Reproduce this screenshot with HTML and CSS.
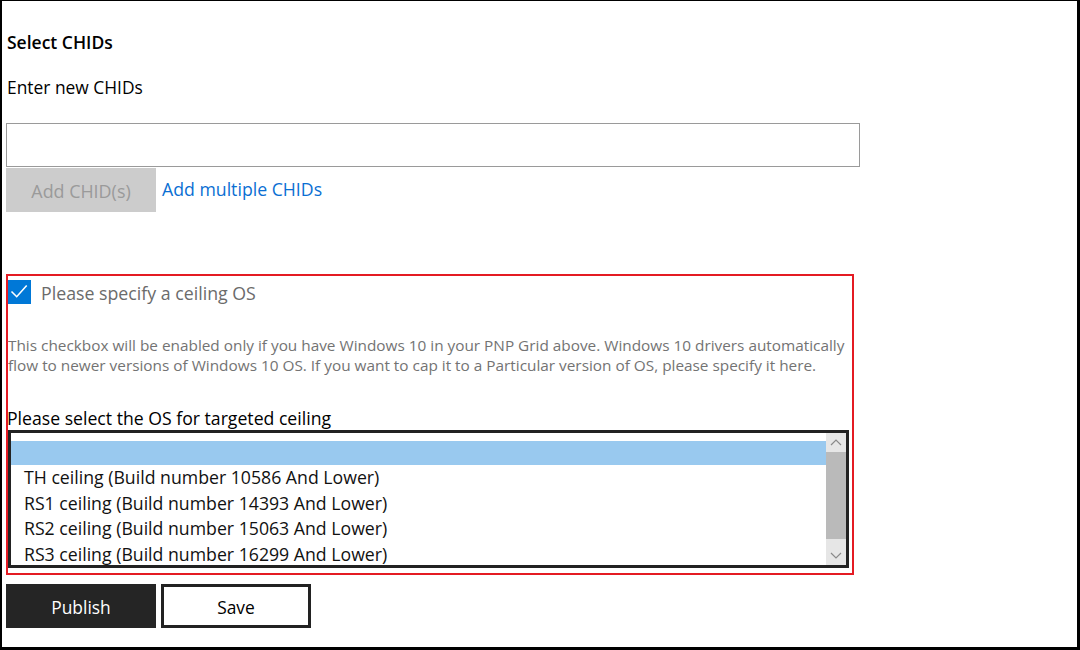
FILE: index.html
```html
<!DOCTYPE html>
<html>
<head>
<meta charset="utf-8">
<link rel="stylesheet" href="styles.css">
</head>
<body>
<div class="page">
  <h2 class="title">Select CHIDs</h2>
  <div class="label">Enter new CHIDs</div>
  <input class="chid-input" type="text">
  <div class="add-row">
    <button class="btn-disabled">Add CHID(s)</button>
    <a class="link" href="#">Add multiple CHIDs</a>
  </div>
  <div class="ceiling-box">
    <div class="check-row">
      <span class="checkbox">
        <svg width="23" height="24" viewBox="0 0 23 24"><polyline points="3.5,11.5 8.7,16.7 18.7,5.5" fill="none" stroke="#fff" stroke-width="1.6"/></svg>
      </span>
      <span class="check-label">Please specify a ceiling OS</span>
    </div>
    <p class="note">This checkbox will be enabled only if you have Windows 10 in your PNP Grid above. Windows 10 drivers automatically flow to newer versions of Windows 10 OS. If you want to cap it to a Particular version of OS, please specify it here.</p>
    <div class="select-label">Please select the OS for targeted ceiling</div>
    <div class="listbox">
      <div class="options">
        <div class="option selected">&nbsp;</div>
        <div class="option">TH ceiling (Build number 10586 And Lower)</div>
        <div class="option">RS1 ceiling (Build number 14393 And Lower)</div>
        <div class="option">RS2 ceiling (Build number 15063 And Lower)</div>
        <div class="option">RS3 ceiling (Build number 16299 And Lower)</div>
      </div>
      <div class="scrollbar">
        <div class="arrow up"><svg width="20" height="20" viewBox="0 0 20 20"><polyline points="5,12 10,7 15,12" fill="none" stroke="#8a8a8a" stroke-width="1.2"/></svg></div>
        <div class="thumb"></div>
        <div class="track"></div>
        <div class="arrow down"><svg width="20" height="20" viewBox="0 0 20 20"><polyline points="5,8 10,13 15,8" fill="none" stroke="#8a8a8a" stroke-width="1.2"/></svg></div>
      </div>
    </div>
  </div>
  <div class="actions">
    <button class="btn-primary">Publish</button>
    <button class="btn-secondary">Save</button>
  </div>
</div>
</body>
</html>
```
FILE: styles.css
```css
html, body {
  margin: 0;
  padding: 0;
  background: #fff;
}
.page {
  box-sizing: border-box;
  width: 1080px;
  height: 650px;
  border-style: solid;
  border-color: #000;
  border-width: 1px 3px 3px 2px;
  padding: 30px 4px 0 4px;
  font-family: "Open Sans", "Noto Sans", sans-serif;
  color: #000;
  overflow: hidden;
}
.title {
  margin: 0;
  font-size: 17.5px;
  font-weight: 600;
  line-height: 22px;
  padding-left: 1px;
}
.label {
  margin-top: 23px;
  font-size: 17.4px;
  line-height: 22px;
  padding-left: 1px;
}
.chid-input {
  display: block;
  box-sizing: border-box;
  margin: 25px 0 0 0;
  width: 854px;
  height: 44px;
  border: 1px solid #9a9a9a;
  outline: none;
  padding: 0 8px;
}
.add-row {
  display: flex;
  align-items: center;
  margin-top: 1px;
}
.btn-disabled {
  width: 150px;
  height: 44px;
  border: none;
  background: #cccccc;
  color: #9a9a9a;
  font-family: inherit;
  font-size: 17.9px;
  padding: 0;
  padding-top: 1px;
}
.link {
  margin-left: 6px;
  margin-top: -3px;
  color: #0a6fd3;
  text-decoration: none;
  font-size: 17.7px;
}
.ceiling-box {
  margin-top: 62px;
  width: 848px;
  height: 301px;
  box-sizing: border-box;
  border: 2px solid #e41b23;
}
.check-row {
  display: flex;
  align-items: flex-start;
  margin-top: 4px;
}
.checkbox {
  display: block;
  width: 23px;
  height: 24px;
  background: #0078d7;
}
.checkbox svg { display: block; }
.check-label {
  margin-left: 10px;
  margin-top: 1px;
  color: #6b6b6b;
  font-size: 17.75px;
  line-height: 24px;
}
.note {
  margin: 30px 0 0 0;
  color: #737373;
  font-size: 15.35px;
  line-height: 20px;
}
.select-label {
  margin-top: 32px;
  font-size: 17.65px;
  line-height: 22px;
  margin-left: -1px;
}
.listbox {
  display: flex;
  width: 841px;
  height: 138px;
  box-sizing: border-box;
  border: 3px solid #222;
  margin-top: 1px;
}
.options {
  flex: 1;
  padding-top: 8px;
  overflow: hidden;
}
.option {
  height: 25.7px;
  line-height: 25.7px;
  font-size: 17.7px;
  padding-left: 13px;
  color: #111;
  white-space: nowrap;
}
.option.selected {
  background: #99c9ef;
  height: 24px;
  line-height: 24px;
}
.scrollbar {
  width: 20px;
  display: flex;
  flex-direction: column;
  background: #e6e6e6;
}
.arrow {
  height: 19px;
}
.arrow svg { display: block; }
.arrow.down { height: 26px; display: flex; align-items: flex-end; }
.thumb {
  height: 87px;
  background: #bababa;
}
.track { flex: 1; }
.actions {
  display: flex;
  gap: 5px;
  margin-top: 9px;
}
.btn-primary, .btn-secondary {
  width: 150px;
  height: 44px;
  box-sizing: border-box;
  font-family: inherit;
  font-size: 17.4px;
  padding: 2px 0 0 0;
}
.btn-primary {
  background: #252525;
  color: #fff;
  border: none;
}
.btn-secondary {
  background: #fff;
  color: #000;
  border: 3px solid #222;
}
```
